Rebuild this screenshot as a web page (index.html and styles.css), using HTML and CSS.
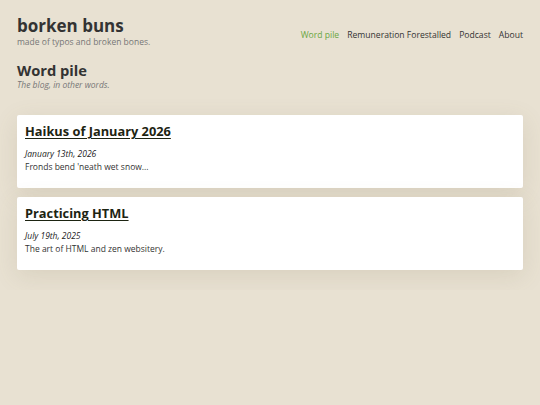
FILE: index.html
```html
<!DOCTYPE html>
<html lang="en">
<head>
<meta charset="utf-8">
<title>Word pile - borken buns</title>
<link rel="stylesheet" href="styles.css">
</head>
<body>
<header class="site-header">
  <div class="brand">
    <div class="brand-title">borken buns</div>
    <div class="brand-tag">made of typos and broken bones.</div>
  </div>
  <nav class="nav">
    <a class="nav-link active" href="#">Word pile</a>
    <a class="nav-link" href="#">Remuneration Forestalled</a>
    <a class="nav-link" href="#">Podcast</a>
    <a class="nav-link" href="#">About</a>
  </nav>
</header>
<section class="page-head">
  <h1 class="page-title">Word pile</h1>
  <p class="page-sub">The blog, in other words.</p>
</section>
<main class="posts">
  <article class="card">
    <h2 class="card-title"><a href="#">Haikus of January 2026</a></h2>
    <p class="card-date">January 13th, 2026</p>
    <p class="card-text">Fronds bend 'neath wet snow...</p>
  </article>
  <article class="card">
    <h2 class="card-title"><a href="#">Practicing HTML</a></h2>
    <p class="card-date">July 19th, 2025</p>
    <p class="card-text">The art of HTML and zen websitery.</p>
  </article>
</main>
</body>
</html>
```

FILE: styles.css
```css
html, body {
  margin: 0;
  padding: 0;
}
body {
  background: #e8e1d2;
  font-family: "Open Sans", "Noto Sans", sans-serif;
  color: #333;
  padding: 16px 17px 20px 17px;
}
.site-header {
  display: flex;
  justify-content: space-between;
  align-items: flex-start;
}
.brand-title {
  font-size: 17px;
  font-weight: 700;
  line-height: 20px;
  color: #333;
}
.brand-tag {
  font-size: 8.5px;
  line-height: 11px;
  color: #777;
}
.nav {
  display: flex;
  gap: 8px;
  margin-top: 13px;
}
.nav-link {
  font-size: 8.6px;
  line-height: 12px;
  color: #333;
  text-decoration: none;
}
.nav-link.active {
  color: #6aa642;
}
.page-head {
  margin-top: 14px;
}
.page-title {
  margin: 0;
  font-size: 14.7px;
  line-height: 18px;
  font-weight: 700;
  color: #333;
}
.page-sub {
  margin: 0;
  font-size: 8.5px;
  line-height: 11px;
  font-style: italic;
  color: #777;
}
.posts {
  margin-top: 25px;
  display: flex;
  flex-direction: column;
  gap: 9px;
}
.card {
  background: #fff;
  border-radius: 2px;
  padding: 7px 8px 15px 8px;
  box-shadow: 0 6px 24px rgba(120, 105, 70, 0.14);
}
.card-title {
  margin: 0;
  font-size: 12.8px;
  line-height: 18px;
  font-weight: 700;
}
.card-title a {
  color: #1d2412;
  text-decoration: underline;
  text-underline-offset: 2px;
  text-decoration-thickness: 1px;
}
.card-date {
  margin: 8px 0 0 0;
  font-size: 8.5px;
  line-height: 12px;
  font-style: italic;
  color: #222;
}
.card-text {
  margin: 1px 0 0 0;
  font-size: 8.5px;
  line-height: 12px;
  color: #333;
}
```
